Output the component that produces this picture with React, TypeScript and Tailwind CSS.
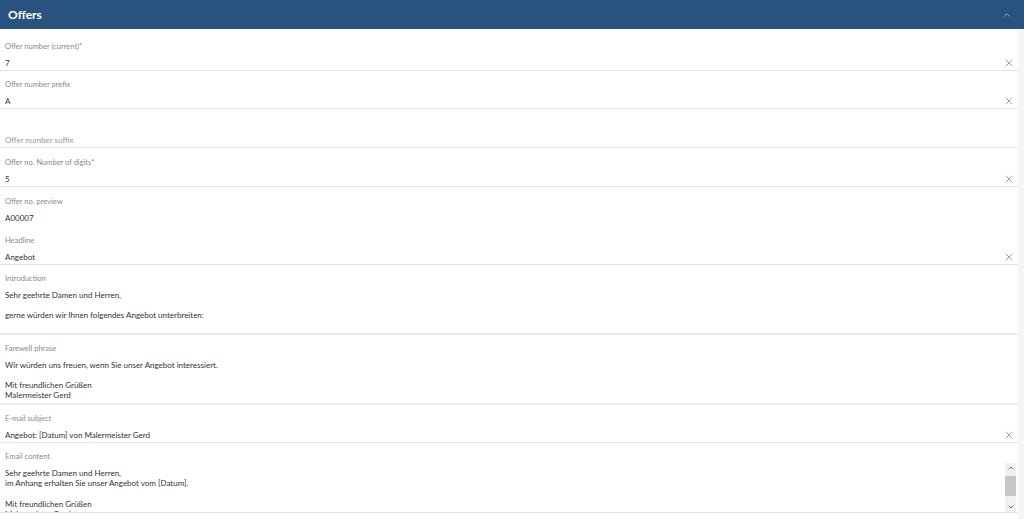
import { X, ChevronUp, ChevronDown } from "lucide-react";

type Field = {
  label?: string;
  value?: string;
  placeholder?: string;
  clearable?: boolean;
  noLine?: boolean;
  top?: string;
};

const fields: Field[] = [
  { label: "Offer number (current)*", value: "7", clearable: true, top: "pt-[11px]" },
  { label: "Offer number prefix", value: "A", clearable: true, top: "pt-[9px]" },
  { placeholder: "Offer number suffix" },
  { label: "Offer no. Number of digits*", value: "5", clearable: true },
  { label: "Offer no. preview", value: "A00007", noLine: true },
  { label: "Headline", value: "Angebot", clearable: true },
];

function TextField({ label, value, placeholder, clearable, noLine, top = "pt-[10px]" }: Field) {
  return (
    <div className={`${top} border-b ${noLine ? "border-transparent" : "border-[#e3e3e3]"}`}>
      <div className="h-[10px] leading-[10px] text-[7.5px] text-[#8a8a8a] pl-[5px]">{label}</div>
      <div className="mt-[4px] h-[14px] flex items-center pl-[5px] pr-[3px]">
        <span className={`flex-1 text-[8px] leading-[14px] ${value ? "text-[#333]" : "text-[#9a9a9a]"}`}>
          {value ?? placeholder}
        </span>
        {clearable && <X className="w-[12px] h-[12px] text-[#6f6f6f]" strokeWidth={1.3} />}
      </div>
    </div>
  );
}

function AreaField({ label, lines }: { label: string; lines: string[] }) {
  return (
    <div className="pt-[9px] border-b-2 border-[#ececec]">
      <div className="h-[10px] leading-[10px] text-[7.5px] text-[#8a8a8a] pl-[5px]">{label}</div>
      <div className="mt-[6px] pl-[5px] h-[43px]">
        {lines.map((l, i) => (
          <div key={i} className="h-[10px] leading-[10px] text-[8px] text-[#333] whitespace-pre">
            {l}
          </div>
        ))}
      </div>
    </div>
  );
}

export default function App() {
  return (
    <div className="w-[1024px] h-[519px] overflow-hidden bg-[#f6f6f6] font-['Lato','Liberation_Sans',sans-serif]">
      <div className="h-[29px] bg-[#29537f] flex items-center justify-between pl-[8px] pr-[12px]">
        <span className="text-white font-bold text-[12px]">Offers</span>
        <ChevronUp className="w-[10px] h-[10px] text-[#a9bdd2]" strokeWidth={2} />
      </div>
      <div className="w-[1018px] bg-white pt-[2px] h-[490px] overflow-hidden">
        {fields.map((f, i) => (
          <TextField key={i} {...f} />
        ))}
        <AreaField
          label="Introduction"
          lines={["Sehr geehrte Damen und Herren,", " ", "gerne würden wir Ihnen folgendes Angebot unterbreiten:"]}
        />
        <AreaField
          label="Farewell phrase"
          lines={["Wir würden uns freuen, wenn Sie unser Angebot interessiert.", " ", "Mit freundlichen Grüßen", "Malermeister Gerd"]}
        />
        <TextField label="E-mail subject" value="Angebot: [Datum] von Malermeister Gerd" clearable top="pt-[9px]" />
        <div className="pt-[9px] border-b border-[#e3e3e3]">
          <div className="h-[10px] leading-[10px] text-[7.5px] text-[#8a8a8a] pl-[5px]">Email content</div>
          <div className="mt-[1px] flex h-[49px]">
            <div className="flex-1 pl-[5px] pt-[5px] overflow-hidden">
              {["Sehr geehrte Damen und Herren,", "im Anhang erhalten Sie unser Angebot vom [Datum].", " ", "Mit freundlichen Grüßen", "Malermeister Gerd"].map((l, i) => (
                <div key={i} className="h-[10.3px] leading-[10.3px] text-[8px] text-[#333] whitespace-pre">
                  {l}
                </div>
              ))}
            </div>
            <div className="w-[11px] mr-[2px] flex flex-col items-center bg-[#f1f1f1]">
              <ChevronUp className="w-[8px] h-[10px] text-[#555]" strokeWidth={2.5} />
              <div className="w-full h-[20px] mt-[3px] bg-[#c6c6c6]" />
              <div className="flex-1" />
              <ChevronDown className="w-[8px] h-[10px] text-[#555]" strokeWidth={2.5} />
            </div>
          </div>
        </div>
      </div>
    </div>
  );
}
